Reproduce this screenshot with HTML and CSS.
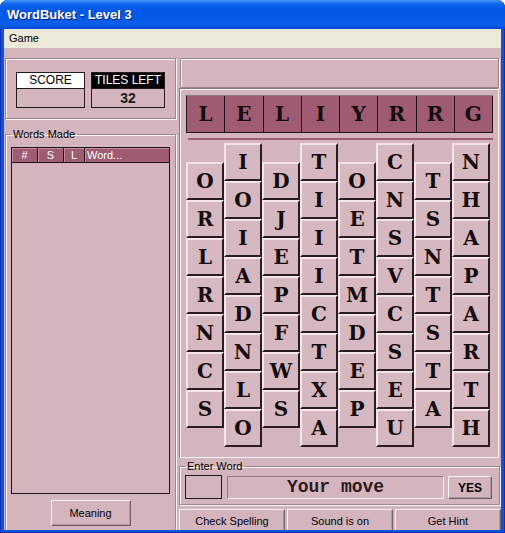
FILE: index.html
```html
<!DOCTYPE html>
<html lang="en">
  <head>
    <meta charset="UTF-8" />
    <title>WordBuket - Level 3</title>
    <link rel="stylesheet" href="styles.css">
  </head>
  <body>
    <div class="window">
      <div class="titlebar">WordBuket - Level 3</div>
      <div class="menubar"><span>Game</span></div>

      <div class="client">
        <!-- Left side: score and word list -->
        <aside class="side">
          <div class="etched stats">
            <div class="stat score-stat">
              <div class="stat-label">SCORE</div>
              <div class="stat-value"></div>
            </div>
            <div class="stat tiles-stat">
              <div class="stat-label">TILES LEFT</div>
              <div class="stat-value">32</div>
            </div>
          </div>

          <fieldset class="etched words">
            <legend>Words Made</legend>
            <div class="word-list">
              <div class="list-head">
                <span>#</span>
                <span>S</span>
                <span>L</span>
                <span class="word-col">Word...</span>
              </div>
            </div>
            <div class="meaning-row">
              <button class="btn meaning">Meaning</button>
            </div>
          </fieldset>
        </aside>

        <!-- Right side: board and controls -->
        <section class="play">
          <div class="etched message"></div>

          <div class="board">
            <div class="picked">
              <span>L</span><span>E</span><span>L</span><span>I</span>
              <span>Y</span><span>R</span><span>R</span><span>G</span>
            </div>
            <div class="picked-line"></div>
            <div class="stacks">
              <div class="stack low">
                <span class="tile">O</span><span class="tile">R</span><span class="tile">L</span><span class="tile">R</span>
                <span class="tile">N</span><span class="tile">C</span><span class="tile">S</span>
              </div>
              <div class="stack">
                <span class="tile">I</span><span class="tile">O</span><span class="tile">I</span><span class="tile">A</span>
                <span class="tile">D</span><span class="tile">N</span><span class="tile">L</span><span class="tile">O</span>
              </div>
              <div class="stack low">
                <span class="tile">D</span><span class="tile">J</span><span class="tile">E</span><span class="tile">P</span>
                <span class="tile">F</span><span class="tile">W</span><span class="tile">S</span>
              </div>
              <div class="stack">
                <span class="tile">T</span><span class="tile">I</span><span class="tile">I</span><span class="tile">I</span>
                <span class="tile">C</span><span class="tile">T</span><span class="tile">X</span><span class="tile">A</span>
              </div>
              <div class="stack low">
                <span class="tile">O</span><span class="tile">E</span><span class="tile">T</span><span class="tile">M</span>
                <span class="tile">D</span><span class="tile">E</span><span class="tile">P</span>
              </div>
              <div class="stack">
                <span class="tile">C</span><span class="tile">N</span><span class="tile">S</span><span class="tile">V</span>
                <span class="tile">C</span><span class="tile">S</span><span class="tile">E</span><span class="tile">U</span>
              </div>
              <div class="stack low">
                <span class="tile">T</span><span class="tile">S</span><span class="tile">N</span><span class="tile">T</span>
                <span class="tile">S</span><span class="tile">T</span><span class="tile">A</span>
              </div>
              <div class="stack">
                <span class="tile">N</span><span class="tile">H</span><span class="tile">A</span><span class="tile">P</span>
                <span class="tile">A</span><span class="tile">R</span><span class="tile">T</span><span class="tile">H</span>
              </div>
            </div>
          </div>

          <fieldset class="etched entry">
            <legend>Enter Word</legend>
            <div class="entry-row">
              <div class="entry-box"></div>
              <div class="entry-field">Your move</div>
              <button class="btn yes">YES</button>
            </div>
          </fieldset>

          <div class="actions">
            <button class="btn">Check Spelling</button>
            <button class="btn">Sound is on</button>
            <button class="btn">Get Hint</button>
          </div>
        </section>
      </div>
    </div>
  </body>
</html>
```

FILE: styles.css
```css
/* General Styling */
* {
  box-sizing: border-box;
}

body {
  margin: 0;
  background-color: #fff;
  font-family: "Liberation Sans", Arial, sans-serif;
  font-size: 11px;
  color: #000;
}

/* Window frame */
.window {
  width: 505px;
  height: 533px;
  display: flex;
  flex-direction: column;
  background-color: #0b55dc;
  border-radius: 8px 8px 0 0;
  box-shadow: inset 1px 0 #0a2fb8, inset -1px 0 #0a2fb8, inset 0 -1px #0a2fb8;
  overflow: hidden;
}

.titlebar {
  height: 29px;
  flex: none;
  display: flex;
  align-items: center;
  padding: 0 7px 1px;
  color: #fff;
  font-size: 13px;
  font-weight: bold;
  text-shadow: 1px 1px #0a1c70;
  background: linear-gradient(#4a98f9, #0e62ea 4px, #0057e6 40%, #0a5fec 85%, #0048d0);
}

.menubar {
  height: 19px;
  flex: none;
  margin: 0 4px;
  padding: 3px 5px 0;
  background-color: #ece9d8;
}

.client {
  flex: 1;
  display: flex;
  align-items: flex-start;
  gap: 3px;
  margin: 0 4px 3px;
  padding: 10px 0 0 1px;
  background-color: #d4b5bd;
  overflow: hidden;
}

/* Group boxes */
.etched {
  border: 1px solid #9a868d;
  box-shadow: inset 1px 1px #fbf3f5, 1px 1px #fbf3f5;
}

fieldset {
  min-width: 0;
}

legend {
  padding: 0 2px;
  line-height: 13px;
  font-size: 11px;
}

/* Left side */
.side {
  width: 171px;
  flex: none;
  display: flex;
  flex-direction: column;
}

.stats {
  height: 61px;
  flex: none;
  display: flex;
  gap: 6px;
  padding: 13px 0 0 10px;
}

.stat {
  height: 36px;
  border: 1px solid #231a1d;
  text-align: center;
}

.score-stat {
  width: 69px;
}

.tiles-stat {
  width: 74px;
}

.stat-label {
  height: 16px;
  line-height: 15px;
  font-size: 12px;
  border-bottom: 1px solid #231a1d;
}

.score-stat .stat-label {
  background-color: #fff;
}

.tiles-stat .stat-label {
  background-color: #000;
  color: #fff;
}

.stat-value {
  line-height: 18px;
  font-size: 14px;
  font-weight: bold;
  color: #1a1a1a;
}

.words {
  flex: none;
  height: 420px;
  margin: 9px 0 0;
  padding: 6px 5px;
}

.word-list {
  height: 347px;
  border: 1px solid #1d1417;
}

.list-head {
  display: grid;
  grid-template-columns: 26px 26px 21px 1fr;
  height: 15px;
  border-bottom: 1px solid #1d1417;
  background-color: #9e5b72;
  color: #fff;
  font-size: 11px;
  line-height: 14px;
  text-align: center;
}

.list-head span {
  border-right: 1px solid #1d1417;
  box-shadow: inset 1px 1px #c28fa0;
}

.list-head .word-col {
  text-align: left;
  padding-left: 2px;
  border-right: none;
}

.meaning-row {
  display: flex;
  justify-content: center;
  margin-top: 6px;
}

.btn {
  font-family: "Liberation Sans", Arial, sans-serif;
  font-size: 11px;
  color: #000;
  background-color: #d4b5bd;
  border: 1px solid;
  border-color: #fbf3f5 #6e5d63 #6e5d63 #fbf3f5;
  box-shadow: inset -1px -1px #b49aa2;
  padding: 0;
}

.meaning {
  width: 80px;
  height: 26px;
}

/* Right side */
.play {
  width: 321px;
  flex: none;
  display: flex;
  flex-direction: column;
}

.play > * {
  flex: none;
}

.message {
  height: 30px;
  margin: 0 1px;
}

.board {
  width: 320px;
  height: 370px;
  padding: 6px 0 0 6px;
  border: 1px solid;
  border-color: #8c7a80 #fbf3f5 #fbf3f5 #8c7a80;
  box-shadow: inset 1px 1px #fbf3f5;
}

.picked {
  display: flex;
  width: 307px;
  height: 38px;
  border-top: 1px solid #8c7a80;
  border-bottom: 1px solid #1d1417;
  border-left: 1px solid #1d1417;
}

.picked span {
  flex: 1;
  background-color: #9e5b72;
  border-right: 1px solid #1d1417;
  text-align: center;
  line-height: 36px;
  font-family: "DejaVu Serif", "Liberation Serif", serif;
  font-weight: bold;
  font-size: 20px;
  color: #140c0f;
}

.picked-line {
  width: 305px;
  height: 2px;
  margin: 5px 0 0 2px;
  background-color: #9e5b72;
}

.stacks {
  display: flex;
  margin-top: 3px;
}

.stack {
  width: 38px;
  display: flex;
  flex-direction: column;
}

.stack.low {
  padding-top: 19px;
}

.tile {
  height: 38px;
  border: 2px solid;
  border-color: #f3e5e9 #2a1d22 #2a1d22 #f3e5e9;
  background-color: #d6b8c0;
  text-align: center;
  line-height: 34px;
  font-family: "DejaVu Serif", "Liberation Serif", serif;
  font-weight: bold;
  font-size: 20px;
  color: #140c0f;
}

.entry {
  margin: 2px 0 0;
  padding: 2px 5px 5px;
}

.entry-row {
  display: flex;
  align-items: flex-start;
}

.entry-box {
  width: 37px;
  height: 24px;
  border: 1px solid #231a1d;
}

.entry-field {
  width: 217px;
  height: 23px;
  margin: 1px 0 0 5px;
  border: 1px solid;
  border-color: #8c7a80 #fbf3f5 #fbf3f5 #8c7a80;
  text-align: center;
  line-height: 21px;
  font-family: "Liberation Mono", "Courier New", monospace;
  font-weight: bold;
  font-size: 18px;
  color: #2a1a1f;
}

.yes {
  width: 44px;
  height: 23px;
  margin: 1px 0 0 4px;
  font-size: 12px;
  font-weight: bold;
}

.actions {
  display: flex;
  gap: 2px;
  margin-top: 4px;
}

.actions .btn {
  width: 106px;
  height: 26px;
  flex: none;
  padding-bottom: 3px;
}
```
